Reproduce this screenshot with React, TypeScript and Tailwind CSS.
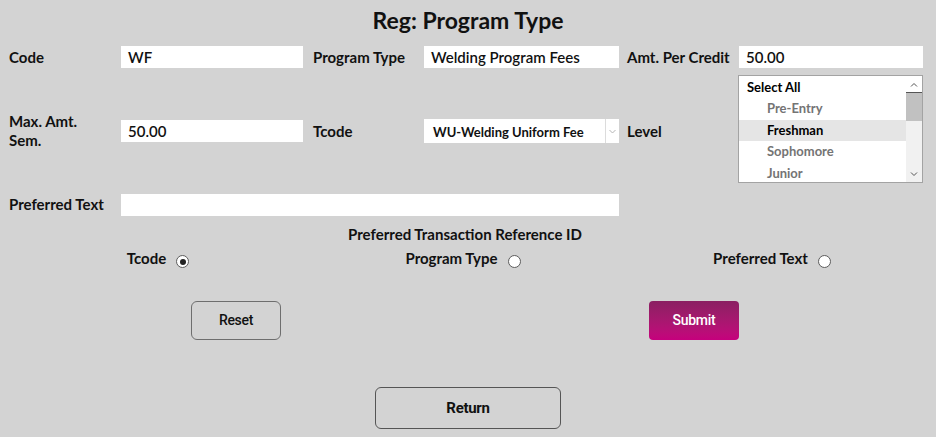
import React, { useState } from 'react';

const LEVELS = [
  { label: 'Pre-Entry', selected: false },
  { label: 'Freshman', selected: true },
  { label: 'Sophomore', selected: false },
  { label: 'Junior', selected: false },
];

function Radio({ checked }: { checked?: boolean }) {
  return (
    <span className="ml-[10px] mt-[6px] flex h-[13px] w-[13px] items-center justify-center rounded-full border border-[#5c5c5c] bg-white">
      {checked && <span className="h-[6px] w-[6px] rounded-full bg-[#222]" />}
    </span>
  );
}

function LevelList() {
  return (
    <div className="flex h-[108px] w-[185px] border border-[#a3a3a3] bg-white">
      <div className="flex-1 overflow-hidden">
        <div className="h-[22px] pl-[8px] pt-[1px] text-[13px] font-bold leading-[20px] text-black">Select All</div>
        {LEVELS.map(l => (
          <div
            key={l.label}
            className={`h-[21.5px] pl-[28px] text-[13px] font-bold leading-[21px] ${
              l.selected ? 'bg-[#e5e5e5] text-black' : 'text-[#747474]'
            }`}
          >
            {l.label}
          </div>
        ))}
      </div>
      <div className="flex w-[16px] flex-col bg-[#f1f1f1]">
        <div className="flex h-[17px] items-center justify-center border-b border-[#555] bg-white">
          <svg width="8" height="5" viewBox="0 0 8 5"><path d="M1 4.5 L4 1.5 L7 4.5" fill="none" stroke="#555" strokeWidth="1" /></svg>
        </div>
        <div className="h-[28px] bg-[#c1c1c1]" />
        <div className="flex-1" />
        <div className="flex h-[16px] items-center justify-center">
          <svg width="8" height="5" viewBox="0 0 8 5"><path d="M1 0.5 L4 3.5 L7 0.5" fill="none" stroke="#555" strokeWidth="1" /></svg>
        </div>
      </div>
    </div>
  );
}

export default function App() {
  const [pref, setPref] = useState('tcode');

  const label = 'text-[15px] font-bold leading-[19px] text-[#111]';
  const input = 'h-[22px] bg-white px-[7px] text-[15px] font-semibold leading-[22px] text-[#111] outline-none';

  return (
    <div className="min-h-screen w-full bg-[#d3d3d3] font-['Lato','Noto_Sans',sans-serif] text-[#111]">
      <h1 className="pt-[8px] text-center text-[23px] font-bold leading-[24px]">Reg: Program Type</h1>

      {/* row 1 */}
      <div className="mt-[14px] flex h-[22px] items-center">
        <div className={`${label} w-[121px] pl-[9px]`}>Code</div>
        <div className={`${input} w-[182px]`}>WF</div>
        <div className={`${label} ml-[10px] w-[111px]`}>Program Type</div>
        <div className={`${input} w-[195px]`}>Welding Program Fees</div>
        <div className={`${label} ml-[8px] w-[112px]`}>Amt. Per Credit</div>
        <div className={`${input} w-[184px]`}>50.00</div>
      </div>

      {/* row 2 */}
      <div className="mt-[7px] flex h-[108px] items-center">
        <div className={`${label} w-[121px] pl-[9px] pt-[4px]`}>
          Max. Amt.
          <br />
          Sem.
        </div>
        <div className={`${input} mt-[4px] w-[182px]`}>50.00</div>
        <div className={`${label} ml-[10px] mt-[4px] w-[111px]`}>Tcode</div>
        <div className="mt-[4px] flex h-[24px] w-[195px] bg-white">
          <div className="flex-1 pl-[9px] pt-[2px] text-[13px] font-bold leading-[22px]">WU-Welding Uniform Fee</div>
          <div className="flex w-[14px] items-center justify-center border-l border-[#dcdcdc]">
            <svg width="7" height="5" viewBox="0 0 7 5"><path d="M0.5 1 L3.5 4 L6.5 1" fill="none" stroke="#b5b5b5" strokeWidth="1" /></svg>
          </div>
        </div>
        <div className={`${label} ml-[8px] mt-[4px] w-[111px]`}>Level</div>
        <LevelList />
      </div>

      {/* row 3 */}
      <div className="mt-[11px] flex h-[22px] items-center">
        <div className={`${label} w-[121px] pl-[9px] pb-[2px]`}>Preferred Text</div>
        <div className={`${input} w-[498px]`} />
      </div>

      <div className="mt-[8px] pr-[6px] text-center text-[15px] font-bold leading-[20px]">Preferred Transaction Reference ID</div>

      <div className="mt-[5px] grid grid-cols-3">
        {[
          { id: 'tcode', text: 'Tcode', cls: 'pl-[4px]' },
          { id: 'program', text: 'Program Type', cls: 'pr-[10px]' },
          { id: 'text', text: 'Preferred Text', cls: 'pr-[16px]' },
        ].map(r => (
          <button key={r.id} onClick={() => setPref(r.id)} className={`flex items-start justify-center ${r.cls}`}>
            <span className={label}>{r.text}</span>
            <Radio checked={pref === r.id} />
          </button>
        ))}
      </div>

      <div className="mt-[33px] grid grid-cols-2">
        <div className="flex justify-center pl-[4px]">
          <button className="h-[39px] w-[90px] rounded-[6px] border border-[#6e6e6e] font-['Roboto',sans-serif] text-[14px] font-medium tracking-[-0.3px] text-[#111]">Reset</button>
        </div>
        <div className="flex justify-center pr-[16px]">
          <button className="h-[39px] w-[90px] rounded-[4px] bg-gradient-to-b from-[#8a1f62] to-[#c6007d] font-['Roboto',sans-serif] text-[14px] font-medium tracking-[-0.3px] text-white">Submit</button>
        </div>
      </div>

      <div className="mt-[47px] flex justify-center">
        <button className="h-[42px] w-[186px] rounded-[6px] border border-[#555] font-['Roboto',sans-serif] text-[15px] font-bold tracking-[-0.3px] text-[#111]">Return</button>
      </div>
    </div>
  );
}
